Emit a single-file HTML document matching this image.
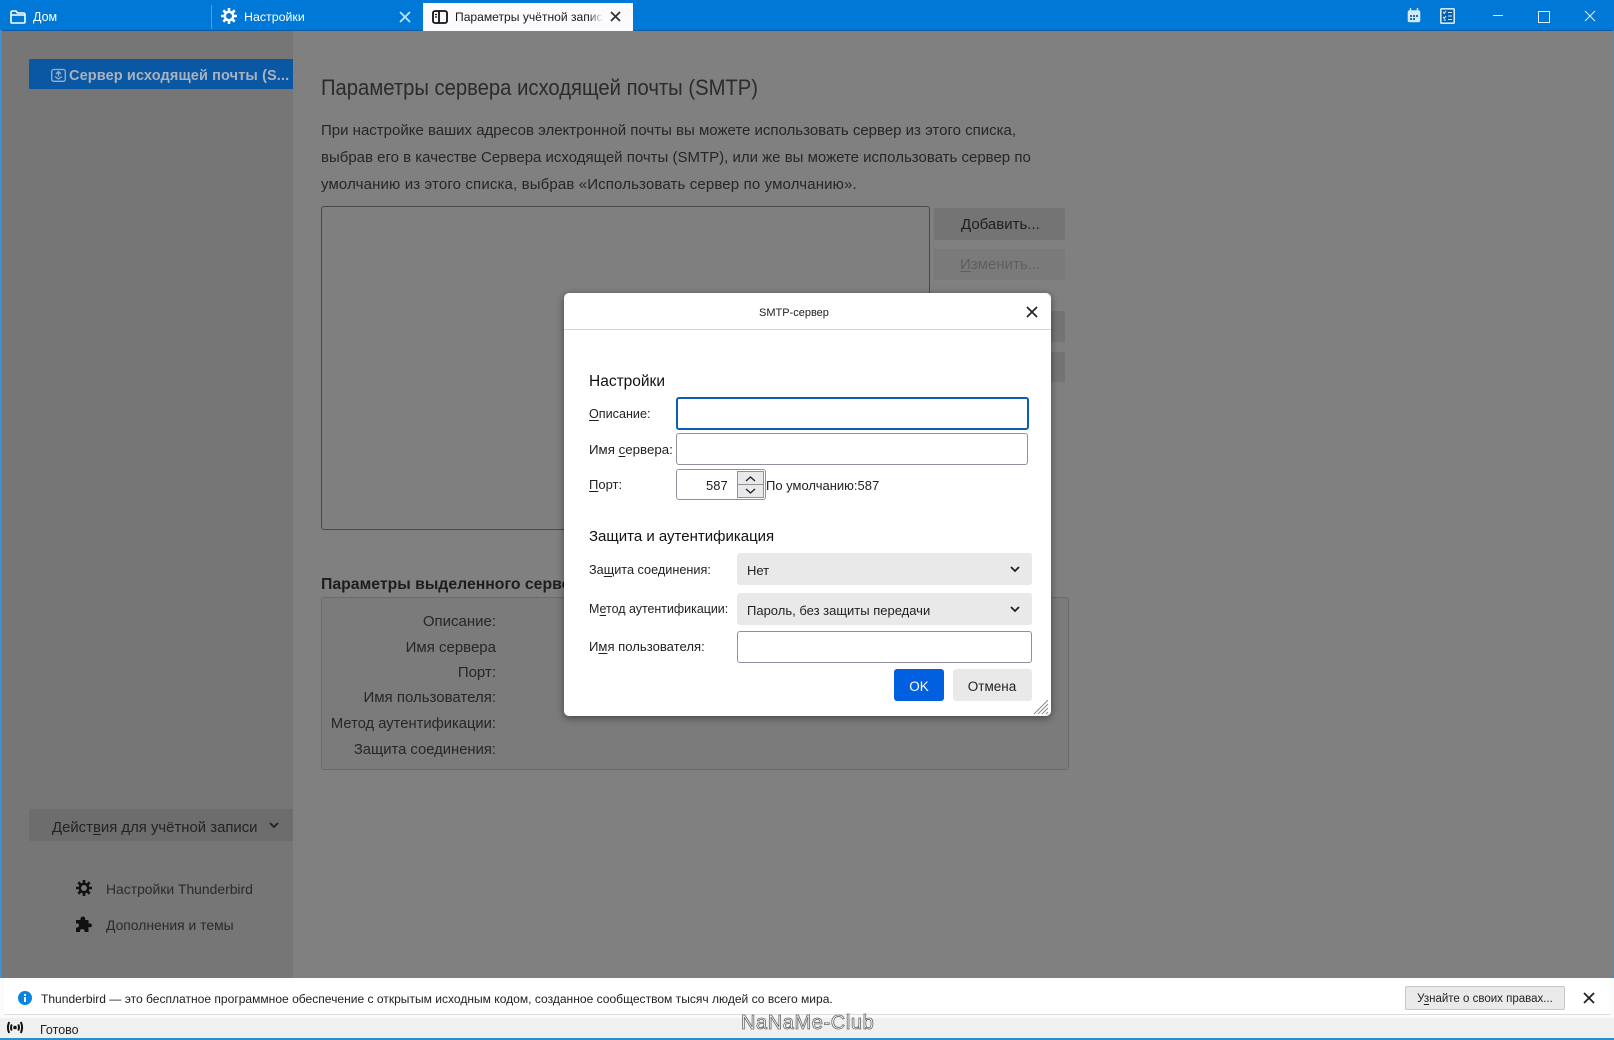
<!DOCTYPE html>
<html lang="ru"><head><meta charset="utf-8"><title>Thunderbird</title>
<style>
html,body{margin:0;padding:0;width:1614px;height:1040px;overflow:hidden;background:#808080}
body{position:relative;font-family:"Liberation Sans","Noto Sans CJK SC",sans-serif;color:#1c1c1c}
.a{position:absolute}
.t{position:absolute;white-space:nowrap;line-height:20px}
u{text-underline-offset:2px;text-decoration-thickness:1px}
.d{color:#262626;font-size:15px}
.l{font-size:13px;color:#222}
.in{position:absolute;box-sizing:border-box;background:#fff;border:1px solid #8f8f9d;border-radius:3px}
.sel{position:absolute;background:#e9e9e9;border-radius:3px;left:737px;width:295px;height:32px}
svg{position:absolute;overflow:visible}
</style></head><body>
<!-- window frame -->
<div class="a" style="left:0;top:0;width:1614px;height:31px;background:#0078d7;border-bottom:1px solid #0a5ca8;box-sizing:border-box"></div>
<div class="a" style="left:0;top:30px;width:2px;height:1010px;background:#3f8fd2"></div>
<div class="a" style="left:1613px;top:30px;width:1px;height:1010px;background:#3f8fd2"></div>
<!-- tabs -->
<svg style="left:10px;top:10px" width="16" height="14" fill="none" stroke="#fff" stroke-width="1.6"><path d="M1 12.5V2.5C1 1.7 1.6 1 2.4 1H6L7.5 3H13.5C14.3 3 15 3.7 15 4.500V12C15 12.8 14.3 13 13.6 13H2C1.4 13 1 13 1 12.5ZM1 5H15"/></svg>
<div class="t" style="left:33px;top:7px;font-size:12.5px;color:#fff">Дом</div>
<div class="a" style="left:211px;top:5px;width:1px;height:24px;background:#4da0e3"></div>
<svg style="left:221px;top:8px" width="16" height="16" viewBox="0 0 16 16"><circle cx="8" cy="8" r="4.2" fill="none" stroke="#fff" stroke-width="2.4"/><g stroke="#fff" stroke-width="2.6"><path d="M8 0V3M8 13V16M0 8H3M13 8H16M2.3 2.3L4.4 4.4M11.6 11.6L13.7 13.7M2.3 13.7L4.4 11.6M11.6 4.4L13.7 2.3"/></g></svg>
<div class="t" style="left:244px;top:7px;font-size:12.4px;color:#fff">Настройки</div>
<svg style="left:400px;top:12px" width="10" height="10" stroke="#bfe3fb" stroke-width="1.8"><path d="M0 0L10 10M10 0L0 10"/></svg>
<div class="a" style="left:423px;top:3px;width:210px;height:28px;background:#fbfbfe"></div>
<svg style="left:432px;top:10px" width="16" height="14" fill="none" stroke="#111" stroke-width="1.8"><rect x="1" y="1" width="14" height="12" rx="2"/><path d="M7 1V13"/><path d="M3 4.5H5M3 7H5" stroke-width="1.2"/></svg>
<div class="t" style="left:455px;top:7px;width:148px;overflow:hidden;font-size:12.1px;color:#1a1a1a;-webkit-mask-image:linear-gradient(90deg,#000 90%,transparent)">Параметры учётной записи</div>
<svg style="left:611px;top:12px" width="9" height="9" stroke="#333" stroke-width="1.800"><path d="M0 0L9 9M9 0L0 9"/></svg>
<!-- titlebar right -->
<svg style="left:1407px;top:8px" width="14" height="15" fill="none"><rect x=".7" y="2.2" width="12.6" height="12" rx="2" fill="#cfeafc"/><path d="M3.5 0V3M10.5 0V3" stroke="#cfeafc" stroke-width="1.4"/><path d="M3 7h2v2H3zM6 7h2v2H6zM9 7h2v2H9zM3 10h2v2H3zM6 10h2v2H6z" fill="#2b6aa8"/></svg>
<svg style="left:1440px;top:8px" width="15" height="16" fill="none"><rect x=".8" y=".8" width="13.4" height="14.4" rx="1" stroke="#cfeafc" stroke-width="1.6" fill="#0a5ca8"/><path d="M3 4L4.3 5.4L6 3M3 9L4.3 10.4L6 8M8 4.5H12M8 8H12M8 11.5H12M3.5 12H6" stroke="#cfeafc" stroke-width="1.1"/></svg>
<div class="a" style="left:1493px;top:15px;width:10px;height:1px;background:#d4ecfb"></div>
<div class="a" style="left:1538px;top:11px;width:10px;height:10px;border:1px solid #e0f1fc"></div>
<svg style="left:1585px;top:11px" width="10" height="10" stroke="#e0f1fc" stroke-width="1"><path d="M0 0L10 10M10 0L0 10"/></svg>
<!-- sidebar -->
<div class="a" style="left:2px;top:31px;width:291px;height:947px;background:#767676"></div>
<div class="a" style="left:29px;top:59px;width:264px;height:30px;background:#0a57a4"></div>
<svg style="left:51px;top:68px" width="15" height="14" fill="none" stroke="#9fb0c2" stroke-width="1.3"><rect x=".7" y="1.5" width="13.6" height="11.8" rx="2"/><path d="M7.5 3.5V8.5M5 6L7.5 3.5L10 6M4 8.5L7.5 11L11 8.5"/></svg>
<div class="t" style="left:69px;top:66px;font-size:14.5px;letter-spacing:.12px;font-weight:bold;color:#a9b3bd">Сервер исходящей почты (S...</div>
<div class="a" style="left:29px;top:809px;width:264px;height:32px;background:#6d6d6d"></div>
<div class="t" style="left:52px;top:817.500px;font-size:14.900px;color:#222">Дейст<u>в</u>ия для учётной записи</div>
<svg style="left:269px;top:822px" width="10" height="7" fill="none" stroke="#222" stroke-width="1.8"><path d="M1 1L5 5L9 1"/></svg>
<svg style="left:76px;top:880px" width="16" height="16" viewBox="0 0 16 16"><circle cx="8" cy="8" r="4.2" fill="none" stroke="#111" stroke-width="2.4"/><g stroke="#111" stroke-width="2.6"><path d="M8 0V3M8 13V16M0 8H3M13 8H16M2.3 2.3L4.4 4.4M11.6 11.6L13.7 13.7M2.3 13.7L4.4 11.6M11.6 4.4L13.7 2.3"/></g></svg>
<div class="t" style="left:106px;top:879px;font-size:13.900px;color:#2a2a2a">Настройки Thunderbird</div>
<svg style="left:76px;top:916px" width="16" height="16" viewBox="0 0 16 16" fill="#111"><path d="M0 4H4.5C4 2.5 5 .5 7 .5S9.800 2.500 9 4H12.500V7.500C14 7 16 7.600 16 9.300S14 11.800 12.500 11V16H8.500C9 14.500 8 13 6.300 13S3.500 14.500 4 16H0V11.500C1.500 12 3 11 3 9.300S1.500 6.800 0 7.500Z"/></svg>
<div class="t" style="left:106px;top:915px;font-size:13.900px;color:#2a2a2a">Дополнения и темы</div>
<!-- main content -->
<div class="t" style="left:321px;top:76px;font-size:22px;line-height:24px;color:#2b2b2b;transform:scaleX(.92);transform-origin:left">Параметры сервера исходящей почты (SMTP)</div>
<div class="t d" style="left:321px;top:121px">При настройке ваших адресов электронной почты вы можете использовать сервер из этого списка,</div>
<div class="t d" style="left:321px;top:147.500px">выбрав его в качестве Сервера исходящей почты (SMTP), или же вы можете использовать сервер по</div>
<div class="t d" style="left:321px;top:174.500px;letter-spacing:.14px">умолчанию из этого списка, выбрав «Использовать сервер по умолчанию».</div>
<div class="a" style="left:321px;top:206px;width:609px;height:324px;border:1px solid #4a4a4a;border-radius:3px;background:#7f7f7f;box-sizing:border-box"></div>
<div class="a" style="left:934px;top:208px;width:131px;height:32px;background:#747474;border-radius:2px"></div>
<div class="t d" style="left:961px;top:215px;font-size:15px;color:#1e1e1e"><u>Д</u>обавить...</div>
<div class="a" style="left:934px;top:249px;width:131px;height:31px;background:#7a7a7a;border-radius:2px"></div>
<div class="t d" style="left:960px;top:255px;color:#5e5e5e"><u>И</u>зменить...</div>
<div class="a" style="left:1040px;top:311px;width:25px;height:31px;background:#747474"></div>
<div class="a" style="left:1040px;top:352px;width:25px;height:30px;background:#747474"></div>
<div class="t" style="left:321px;top:574.500px;font-size:15.800px;font-weight:bold;color:#1d1d1d">Параметры выделенного сервера</div>
<div class="a" style="left:321px;top:597px;width:748px;height:173px;border:1px solid #6b6b6b;border-radius:3px;box-sizing:border-box;background:#7b7b7b"></div>
<div class="t d" style="right:1118px;top:612px">Описание:</div>
<div class="t d" style="right:1118px;top:638px">Имя сервера</div>
<div class="t d" style="right:1118px;top:663px">Порт:</div>
<div class="t d" style="right:1118px;top:688px">Имя пользователя:</div>
<div class="t d" style="right:1118px;top:713.500px;font-size:14.750px">Метод аутентификации:</div>
<div class="t d" style="right:1118px;top:739.500px;font-size:14.800px">Защита соединения:</div>
<!-- dialog -->
<div class="a" style="left:564px;top:293px;width:487px;height:423px;background:#fff;border-radius:5px;box-shadow:0 2px 8px rgba(0,0,0,.45)"></div>
<div class="a" style="left:564px;top:329px;width:487px;height:1px;background:#d4d4d4"></div>
<div class="t" style="left:759px;top:302.500px;font-size:11px;color:#222">SMTP-сервер</div>
<svg style="left:1027px;top:307px" width="10" height="10" stroke="#222" stroke-width="1.7"><path d="M0 0L10 10M10 0L0 10"/></svg>
<div class="t" style="left:589px;top:371.500px;font-size:15.5px;color:#111">Настройки</div>
<div class="t l" style="left:589px;top:403.500px;font-size:12.600px"><u>О</u>писание:</div>
<div class="a" style="left:676px;top:396.500px;width:353px;height:33px;box-sizing:border-box;border:2px solid #0a5fb4;border-radius:3px;background:#fff"></div>
<div class="t l" style="left:589px;top:439.500px;font-size:13.300px">Имя <u>с</u>ервера:</div>
<div class="in" style="left:676px;top:433px;width:352px;height:32px"></div>
<div class="t l" style="left:589px;top:474.500px"><u>П</u>орт:</div>
<div class="in" style="left:676px;top:469px;width:90px;height:31px"></div>
<div class="t l" style="left:706px;top:475.500px">587</div>
<div class="a" style="left:737px;top:471px;width:27px;height:27px;background:#e9e9e9;border:1px solid #8f8f9d;box-sizing:border-box"></div>
<div class="a" style="left:737px;top:484px;width:27px;height:1px;background:#8f8f9d"></div>
<svg style="left:745px;top:476px" width="11" height="18" fill="none" stroke="#222" stroke-width="1.3"><path d="M1 5L5.500 1L10 5M1 13L5.500 17L10 13"/></svg>
<div class="t l" style="left:766px;top:475.500px">По умолчанию:587</div>
<div class="t" style="left:589px;top:526.500px;font-size:15px;color:#111">Защита и аутентификация</div>
<div class="t l" style="left:589px;top:559.500px;font-size:12.700px">За<u>щ</u>ита соединения:</div>
<div class="sel" style="top:553px"></div>
<div class="t l" style="left:747px;top:560.500px">Нет</div>
<svg style="left:1010px;top:566px" width="10" height="7" fill="none" stroke="#222" stroke-width="1.8"><path d="M1 1L5 5L9 1"/></svg>
<div class="t l" style="left:589px;top:598.500px;font-size:12.450px">М<u>е</u>тод аутентификации:</div>
<div class="sel" style="top:593px"></div>
<div class="t l" style="left:747px;top:600.500px">Пароль, без защиты передачи</div>
<svg style="left:1010px;top:606px" width="10" height="7" fill="none" stroke="#222" stroke-width="1.8"><path d="M1 1L5 5L9 1"/></svg>
<div class="t l" style="left:589px;top:636.500px;font-size:13.100px">И<u>м</u>я пользователя:</div>
<div class="in" style="left:737px;top:631px;width:295px;height:32px"></div>
<div class="a" style="left:894px;top:669px;width:50px;height:32px;background:#0060df;border-radius:3px"></div>
<div class="t" style="left:894px;top:676.500px;width:50px;text-align:center;font-size:13.5px;color:#fff">OK</div>
<div class="a" style="left:953px;top:669px;width:79px;height:32px;background:#e9e9e9;border-radius:3px"></div>
<div class="t" style="left:952.500px;top:676.500px;width:79px;text-align:center;font-size:13.5px;color:#222">Отмена</div>
<svg style="left:1034px;top:700px" width="15" height="15" stroke="#8a8a8a" stroke-width="1"><path d="M0 14L14 0M4 14L14 4M8 14L14 8M12 14L14 12"/></svg>
<!-- notification -->
<div class="a" style="left:0;top:978px;width:1614px;height:40px;background:#fbfbfb"></div>
<div class="a" style="left:4px;top:978px;width:1606px;height:36px;background:#fff;border-bottom:1px solid #ddd"></div>
<svg style="left:18px;top:991px" width="14" height="14"><circle cx="7" cy="7" r="7" fill="#0a84e0"/><path d="M6 3h2v2H6zM6 6h2v5H6z" fill="#fff"/></svg>
<div class="t" style="left:41px;top:989px;font-size:12.050px;color:#1e1e1e">Thunderbird — это бесплатное программное обеспечение с открытым исходным кодом, созданное сообществом тысяч людей со всего мира.</div>
<div class="a" style="left:1405px;top:986px;width:160px;height:24px;box-sizing:border-box;background:#eaeaea;border:1px solid #c6c6c6;border-radius:2px"></div>
<div class="t" style="left:1405px;top:989px;width:160px;text-align:center;font-size:11.500px;color:#222">У<u>з</u>найте о своих правах...</div>
<svg style="left:1584px;top:993px" width="10" height="10" stroke="#222" stroke-width="1.8"><path d="M0 0L10 10M10 0L0 10"/></svg>
<!-- status -->
<div class="a" style="left:0;top:1018px;width:1614px;height:20px;background:#f0f0f0"></div>
<div class="a" style="left:0;top:1038px;width:1614px;height:2px;background:#2a8fc4"></div>
<svg style="left:7px;top:1021px" width="16" height="13" fill="none" stroke="#111" stroke-width="2"><circle cx="8" cy="6.500" r="1.800" fill="#111" stroke="none"/><path d="M4.800 3.500Q3.200 6.500 4.800 9.500M11.200 3.500Q12.800 6.500 11.200 9.500M2.200 1Q-.4 6.500 2.200 12M13.800 1Q16.400 6.500 13.800 12"/></svg>
<div class="t" style="left:40px;top:1020px;font-size:12.500px;color:#222">Готово</div>
<div class="t" style="left:741px;top:1012.500px;font-size:20px;letter-spacing:.6px;color:#fff;-webkit-text-stroke:.8px #666">NaNaMe-Club</div>
</body></html>
